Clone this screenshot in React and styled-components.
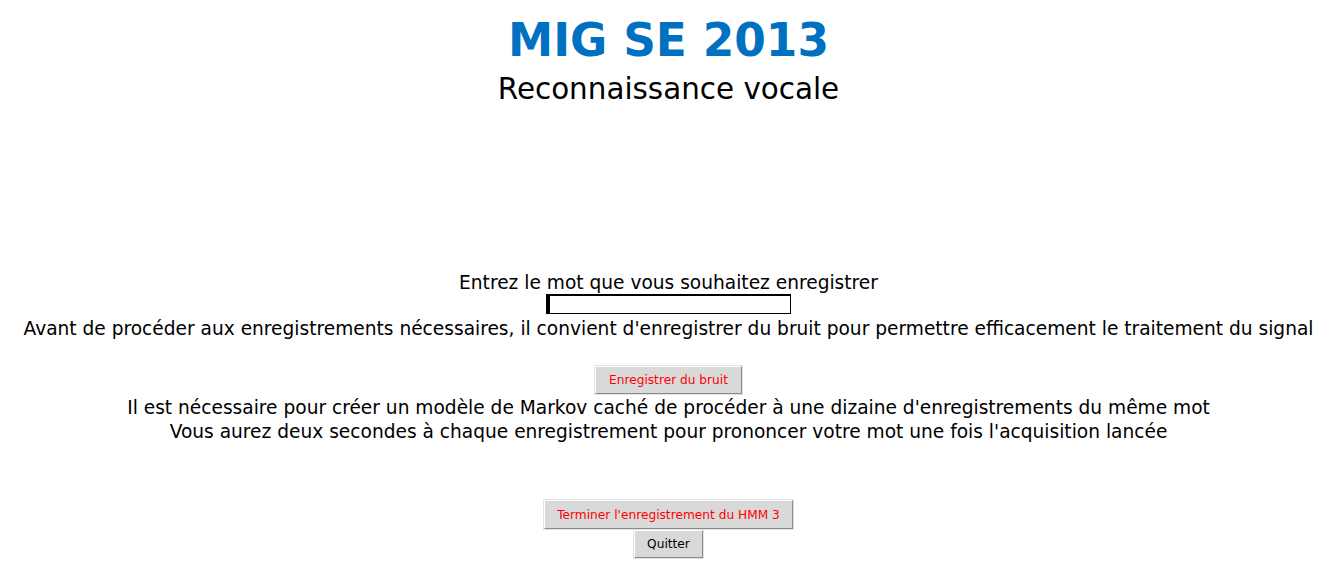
import styled, { createGlobalStyle } from 'styled-components'

const GlobalStyle = createGlobalStyle`
  html, body {
    margin: 0;
    padding: 0;
    background: #ffffff;
    font-family: "DejaVu Sans", "Liberation Sans", sans-serif;
  }
`

const Window = styled.div`
  display: flex;
  flex-direction: column;
  align-items: center;
  width: 1335px;
  height: 587px;
  box-sizing: border-box;
  padding: 14px 0 0 2px;
`

const Title = styled.h1`
  margin: 0;
  font-size: 45.4px;
  font-weight: 700;
  line-height: 54px;
  color: #0070c0;
`

const Subtitle = styled.h2`
  margin: 3px 0 0;
  font-size: 29.4px;
  font-weight: 400;
  line-height: 36px;
  color: #000;
`

const Form = styled.div`
  display: flex;
  flex-direction: column;
  align-items: center;
  margin-top: 164px;
`

const Label = styled.div`
  margin-top: ${p => p.$mt || 0}px;
  font-size: 18.6px;
  line-height: 24px;
  color: #000;
  text-align: center;
  white-space: nowrap;
`

const WordInput = styled.input`
  box-sizing: border-box;
  width: 245px;
  height: 20px;
  margin: -1px 0 0;
  padding: 0 0 0 2px;
  border: 1px solid #000;
  border-left-width: 3px;
  box-shadow: inset 1px 1px 0 #000;
  outline: none;
  background: #fff;
  caret-color: #000;
`

const Button = styled.button`
  box-sizing: border-box;
  height: ${p => p.$h || 28}px;
  padding: 0 12.5px;
  margin: ${p => p.$mt || 0}px 0 0;
  background: #d9d9d9;
  border: 1px solid;
  border-color: #ffffff #8a8a8a #8a8a8a #ffffff;
  outline: 1px solid #e3e3e3;
  font-family: "DejaVu Sans", sans-serif;
  font-size: 12.2px;
  color: ${p => (p.$alert ? '#ff0000' : '#000000')};
  cursor: pointer;
`

export default function App() {
  return (
    <>
      <GlobalStyle />
      <Window>
        <Title>MIG SE 2013</Title>
        <Subtitle>Reconnaissance vocale</Subtitle>

        <Form>
          <Label>Entrez le mot que vous souhaitez enregistrer</Label>
          <WordInput type="text" />
          <Label $mt={3}>
            Avant de procéder aux enregistrements nécessaires, il convient d'enregistrer du bruit pour permettre efficacement le traitement du signal
          </Label>

          <Button $alert $mt={25}>Enregistrer du bruit</Button>

          <Label $mt={2}>
            Il est nécessaire pour créer un modèle de Markov caché de procéder à une dizaine d'enregistrements du même mot
          </Label>
          <Label>
            Vous aurez deux secondes à chaque enregistrement pour prononcer votre mot une fois l'acquisition lancée
          </Label>

          <Button $alert $mt={56} $h={29}>Terminer l'enregistrement du HMM 3</Button>
          <Button $mt={1}>Quitter</Button>
        </Form>
      </Window>
    </>
  )
}
